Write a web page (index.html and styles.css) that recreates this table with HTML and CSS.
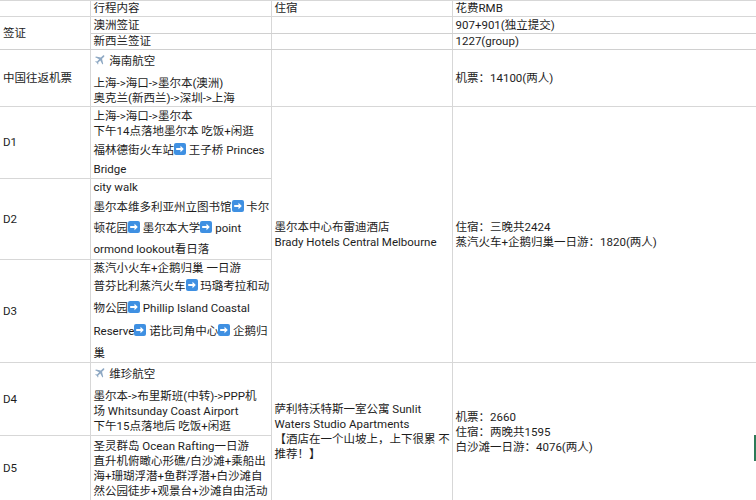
FILE: index.html
```html
<!DOCTYPE html>
<html lang="zh-CN">
<head>
<meta charset="utf-8">
<title>行程</title>
<link rel="stylesheet" href="styles.css">
</head>
<body>
<div class="sheet">
<table class="grid">
  <colgroup>
    <col class="c1"><col class="c2"><col class="c3"><col class="c4">
  </colgroup>
  <tr class="r-head">
    <td></td><td>行程内容</td><td>住宿</td><td>花费RMB</td>
  </tr>
  <tr class="r-visa1">
    <td rowspan="2">签证</td><td>澳洲签证</td><td></td><td>907+901(独立提交)</td>
  </tr>
  <tr class="r-visa2">
    <td>新西兰签证</td><td></td><td>1227(group)</td>
  </tr>
  <tr class="r-flight">
    <td>中国往返机票</td>
    <td>
      <div class="air"><svg class="plane" viewBox="0 0 24 24"><path d="M21 16v-2l-8-5V3.5c0-.83-.67-1.5-1.5-1.5S10 2.67 10 3.5V9l-8 5v2l8-2.5V19l-2 1.5V22l3.5-1 3.5 1v-1.5L13 19v-5.5l8 2.5z"/></svg> 海南航空</div>
      <div class="ln">上海-&gt;海口-&gt;墨尔本(澳洲)</div>
      <div class="ln">奥克兰(新西兰)-&gt;深圳-&gt;上海</div>
    </td>
    <td></td>
    <td>机票：14100(两人)</td>
  </tr>
  <tr class="r-d1">
    <td>D1</td>
    <td>
      <div class="ln t17">上海-&gt;海口-&gt;墨尔本</div>
      <div class="ln">下午14点落地墨尔本 吃饭+闲逛</div>
      <div class="ln t20a">福林德街火车站<svg class="arr" viewBox="0 0 12 12"><rect x="0" y="0" width="12" height="12" rx="2"/><path d="M2.2 5h4.3V2.8L9.8 6 6.5 9.2V7H2.2z"/></svg> 王子桥 Princes</div>
      <div class="ln t19b">Bridge</div>
    </td>
    <td rowspan="3">
      <div class="ln">墨尔本中心布雷迪酒店</div>
      <div class="ln">Brady Hotels Central Melbourne</div>
    </td>
    <td rowspan="3">
      <div class="ln">住宿：三晚共2424</div>
      <div class="ln">蒸汽火车+企鹅归巢一日游：1820(两人)</div>
    </td>
  </tr>
  <tr class="r-d2">
    <td>D2</td>
    <td>
      <div class="ln">city walk</div>
      <div class="ln t21">墨尔本维多利亚州立图书馆<svg class="arr" viewBox="0 0 12 12"><rect x="0" y="0" width="12" height="12" rx="2"/><path d="M2.2 5h4.3V2.8L9.8 6 6.5 9.2V7H2.2z"/></svg> 卡尔</div>
      <div class="ln t21">顿花园<svg class="arr" viewBox="0 0 12 12"><rect x="0" y="0" width="12" height="12" rx="2"/><path d="M2.2 5h4.3V2.8L9.8 6 6.5 9.2V7H2.2z"/></svg> 墨尔本大学<svg class="arr" viewBox="0 0 12 12"><rect x="0" y="0" width="12" height="12" rx="2"/><path d="M2.2 5h4.3V2.8L9.8 6 6.5 9.2V7H2.2z"/></svg> point</div>
      <div class="ln t21">ormond lookout看日落</div>
    </td>
  </tr>
  <tr class="r-d3">
    <td>D3</td>
    <td>
      <div class="ln">蒸汽小火车+企鹅归巢 一日游</div>
      <div class="ln t19">普芬比利蒸汽火车<svg class="arr" viewBox="0 0 12 12"><rect x="0" y="0" width="12" height="12" rx="2"/><path d="M2.2 5h4.3V2.8L9.8 6 6.5 9.2V7H2.2z"/></svg> 玛璐考拉和动</div>
      <div class="ln t23">物公园<svg class="arr" viewBox="0 0 12 12"><rect x="0" y="0" width="12" height="12" rx="2"/><path d="M2.2 5h4.3V2.8L9.8 6 6.5 9.2V7H2.2z"/></svg> Phillip Island Coastal</div>
      <div class="ln t23">Reserve<svg class="arr" viewBox="0 0 12 12"><rect x="0" y="0" width="12" height="12" rx="2"/><path d="M2.2 5h4.3V2.8L9.8 6 6.5 9.2V7H2.2z"/></svg> 诺比司角中心<svg class="arr" viewBox="0 0 12 12"><rect x="0" y="0" width="12" height="12" rx="2"/><path d="M2.2 5h4.3V2.8L9.8 6 6.5 9.2V7H2.2z"/></svg> 企鹅归</div>
      <div class="ln t21">巢</div>
    </td>
  </tr>
  <tr class="r-d4">
    <td>D4</td>
    <td>
      <div class="air"><svg class="plane" viewBox="0 0 24 24"><path d="M21 16v-2l-8-5V3.5c0-.83-.67-1.5-1.5-1.5S10 2.67 10 3.5V9l-8 5v2l8-2.5V19l-2 1.5V22l3.5-1 3.5 1v-1.5L13 19v-5.5l8 2.5z"/></svg> 维珍航空</div>
      <div class="ln">墨尔本-&gt;布里斯班(中转)-&gt;PPP机</div>
      <div class="ln">场 Whitsunday Coast Airport</div>
      <div class="ln">下午15点落地后 吃饭+闲逛</div>
    </td>
    <td rowspan="2">
      <div class="ln">萨利特沃特斯一室公寓 Sunlit</div>
      <div class="ln">Waters Studio Apartments</div>
      <div class="ln">【酒店在一个山坡上，上下很累 不</div>
      <div class="ln">推荐！】</div>
    </td>
    <td rowspan="2">
      <div class="ln">机票：2660</div>
      <div class="ln">住宿：两晚共1595</div>
      <div class="ln">白沙滩一日游：4076(两人)</div>
    </td>
  </tr>
  <tr class="r-d5">
    <td>D5</td>
    <td>
      <div class="ln">圣灵群岛 Ocean Rafting一日游</div>
      <div class="ln">直升机俯瞰心形礁/白沙滩+乘船出</div>
      <div class="ln">海+珊瑚浮潜+鱼群浮潜+白沙滩自</div>
      <div class="ln">然公园徒步+观景台+沙滩自由活动</div>
    </td>
  </tr>
</table>
<div class="sel-edge"></div>
</div>
</body>
</html>
```
FILE: styles.css
```css
html, body {
  margin: 0;
  padding: 0;
  background: #ffffff;
}

body {
  font-family: Roboto, "Noto Sans CJK SC", "Liberation Sans", sans-serif;
  font-size: 11.5px;
  color: #1d1d1d;
}

.sheet {
  position: relative;
  width: 756px;
  height: 500px;
  overflow: hidden;
}

.grid {
  border-collapse: collapse;
  table-layout: fixed;
  width: 758px;
  border-top: 1px solid #a9a9a9;
}

.c1 { width: 90px; }
.c2 { width: 181px; }
.c3 { width: 181px; }
.c4 { width: 306px; }

.grid td {
  border: 1px solid #d7d7d7;
  padding: 0 0 0 3px;
  vertical-align: middle;
  line-height: 15px;
  white-space: nowrap;
  overflow: hidden;
}

.grid tr td:first-child {
  border-left: none;
}

.r-head { height: 16px; }
.r-visa1 { height: 17px; }
.r-visa2 { height: 16px; }
.r-flight { height: 57px; }
.r-d1 { height: 72px; }
.r-d2 { height: 81px; }
.r-d3 { height: 103px; }
.r-d4 { height: 73px; }
.r-d5 { height: 66px; }

.r-visa1 td, .r-visa2 td {
  border-bottom-color: #d0d0d0;
}

.ln {
  line-height: 15px;
}

.t17 { padding-top: 2px; line-height: 15px; }
.t19 { padding-top: 2px; line-height: 17px; }
.t19b { padding-top: 2px; line-height: 17px; }
.t20a { padding-top: 2px; line-height: 18px; }
.t21 { padding-top: 3px; line-height: 18px; }
.t23 { padding-top: 3px; line-height: 20px; }

.air {
  line-height: 21px;
  margin-bottom: 4px;
}

.plane {
  width: 13px;
  height: 13px;
  vertical-align: -1px;
  fill: #8fa9c4;
  transform: rotate(45deg);
}

.arr {
  width: 12px;
  height: 12px;
  vertical-align: -1px;
}

.arr rect {
  fill: #3f90e2;
}

.arr path {
  fill: #ffffff;
}

.sel-edge {
  position: absolute;
  right: 0;
  top: 435px;
  width: 2px;
  height: 26px;
  background: #2d7a58;
}
```
